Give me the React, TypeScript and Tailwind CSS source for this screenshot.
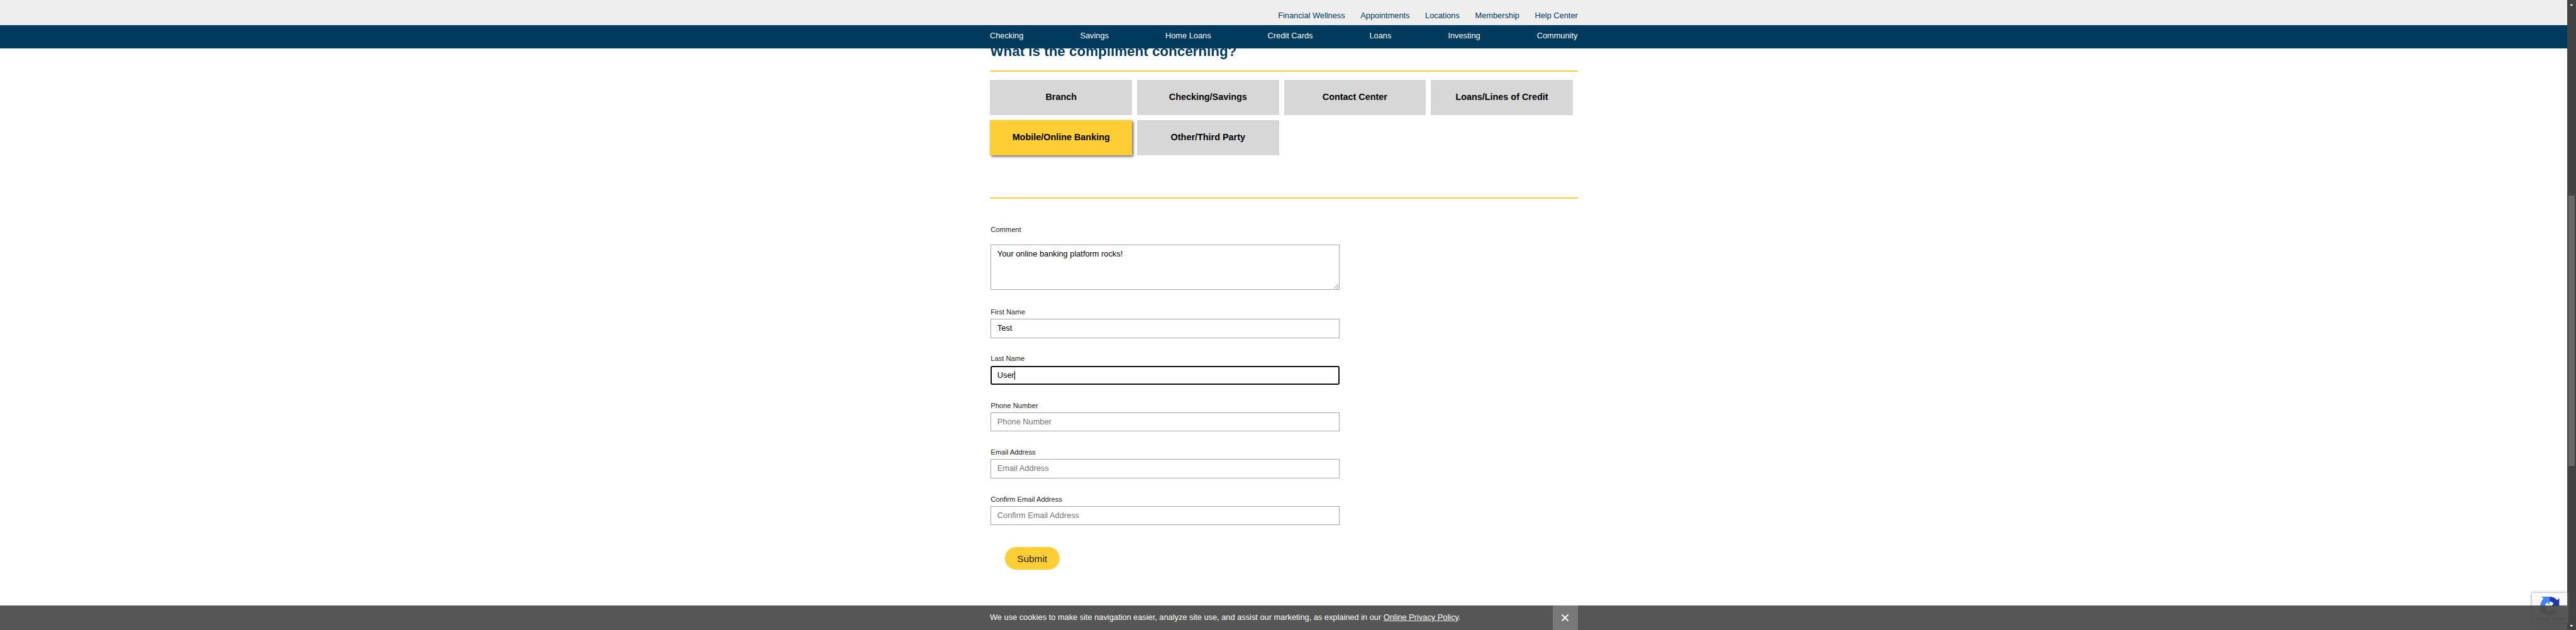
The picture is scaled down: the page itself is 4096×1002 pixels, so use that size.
import React from "react";

const topLinks = ["Financial Wellness", "Appointments", "Locations", "Membership", "Help Center"];
const navLinks = ["Checking", "Savings", "Home Loans", "Credit Cards", "Loans", "Investing", "Community"];
const topics = [
  "Branch",
  "Checking/Savings",
  "Contact Center",
  "Loans/Lines of Credit",
  "Mobile/Online Banking",
  "Other/Third Party",
];
const selectedTopic = "Mobile/Online Banking";

type FieldProps = { label: string; value?: string; focused?: boolean };

function Field({ label, value, focused }: FieldProps) {
  return (
    <div className="h-[74.4px]">
      <div className="h-[16px] text-[11.2px] leading-[16px] text-[#222]">{label}</div>
      <div
        className={
          focused
            ? "mt-[3.2px] flex h-[30.4px] items-center rounded-[3px] border-2 border-[#101010] pl-[8.6px] text-[12.8px] leading-[16px] text-black"
            : "mt-[3.2px] flex h-[30.4px] items-center border border-[#a6a6a6] pl-[9.6px] text-[12.8px] leading-[16px] text-black"
        }
      >
        {value ? <span>{value}</span> : <span className="text-[#757575]">{label}</span>}
        {focused && <span className="h-[14px] w-px bg-black" />}
      </div>
    </div>
  );
}

function RecaptchaBadge() {
  return (
    <div className="absolute right-0 bottom-[10.8px] flex h-[48px] w-[56px] flex-col rounded-l-[2px] bg-[#f9f9f9] pt-[5.4px] shadow-[0_0_4px_gray]">
      <svg className="ml-[12.8px] h-[30.4px] w-[30.4px]" viewBox="0 0 64 64">
        <path
          fill="#1c3aa9"
          d="M64 31.955l-.033-1.37V4.687l-7.16 7.16C50.948 4.674 42.033.093 32.05.093c-10.4 0-19.622 4.96-25.458 12.64l11.736 11.86a15.55 15.55 0 0 1 4.754-5.334c2.05-1.6 4.952-2.906 8.968-2.906.485 0 .86.057 1.135.163 4.976.393 9.288 3.14 11.828 7.124l-8.307 8.307L64 31.953"
        />
        <path
          fill="#4285f4"
          d="M31.862.094l-1.37.033H4.594l7.16 7.16C4.58 13.147 0 22.06 0 32.046c0 10.4 4.96 19.622 12.64 25.458L24.5 45.768a15.55 15.55 0 0 1-5.334-4.754c-1.6-2.05-2.906-4.952-2.906-8.968 0-.485.057-.86.163-1.135.393-4.976 3.14-9.288 7.124-11.828l8.307 8.307L31.86.095"
        />
        <path
          fill="#ababab"
          d="M.001 32.045l.033 1.37v25.898l7.16-7.16c5.86 7.173 14.774 11.754 24.76 11.754 10.4 0 19.622-4.96 25.458-12.64l-11.736-11.86a15.55 15.55 0 0 1-4.754 5.334c-2.05 1.6-4.952 2.906-8.968 2.906-.485 0-.86-.057-1.135-.163-4.976-.393-9.288-3.14-11.828-7.124l8.307-8.307c-10.522.04-22.4.066-27.295-.005"
        />
      </svg>
      <div className="mt-[2px] ml-[5.6px] font-[Roboto,sans-serif] text-[6.4px] leading-[8px] whitespace-nowrap text-[#555]">
        Privacy - Terms
      </div>
    </div>
  );
}

export default function App() {
  return (
    <div className="flex h-[1002px] w-[4096px] overflow-hidden bg-white font-['Liberation_Sans',Arial,sans-serif] text-[12.8px]">
      <div className="relative flex min-w-0 flex-1 flex-col">
        <header className="relative z-10">
          <div className="h-[40px] bg-[#eee]">
            <div className="ml-[1574.4px] flex w-[934.4px] justify-end gap-[24.6px] pt-[16.5px] leading-[16px] text-[#003a5d]">
              {topLinks.map((link) => (
                <a key={link}>{link}</a>
              ))}
            </div>
          </div>
          <nav className="h-[36.8px] bg-[#003a5d]">
            <div className="ml-[1574px] flex w-[934.4px] justify-between pt-[9.2px] leading-[16px] text-white">
              {navLinks.map((link) => (
                <a key={link}>{link}</a>
              ))}
            </div>
          </nav>
        </header>

        <main className="ml-[1574.4px] w-[934.4px]">
          <div className="flex h-[35.2px] items-end pb-[16.8px]">
            <h1 className="text-[22.4px] leading-[26px] font-bold whitespace-nowrap text-[#003a5d]">
              What is the compliment concerning?
            </h1>
          </div>
          <div className="h-[2.4px] bg-[#ffcd34]" />

          <div className="mt-[12.8px] grid h-[186.4px] grid-cols-[repeat(4,225.6px)] grid-rows-[56px_56px] gap-[8px]">
            {topics.map((topic) => (
              <button
                key={topic}
                className={
                  topic === selectedTopic
                    ? "bg-[#ffcd34] text-[14.4px] font-bold text-black shadow-[1.6px_1.6px_4px_#666]"
                    : "bg-[#d7d7d7] text-[14.4px] font-bold text-black"
                }
              >
                {topic}
              </button>
            ))}
          </div>
          <div className="h-[2.4px] bg-[#ffcd34]" />

          <form className="ml-[0.8px] w-[555.2px] pt-[41px]">
            <div className="h-[16px] text-[11.2px] leading-[16px] text-[#222]">Comment</div>
            <div className="relative mt-[15.8px] h-[72px] border border-[#a6a6a6] pt-[6.2px] pl-[9.6px] leading-[16px] text-black">
              Your online banking platform rocks!
              <svg className="absolute right-0 bottom-0 h-[9px] w-[9px]" viewBox="0 0 9 9" stroke="#777" strokeWidth="0.9">
                <path d="M1 8 8 1M5 8 8 5" />
              </svg>
            </div>
            <div className="mt-[27.2px]">
              <Field label="First Name" value="Test" />
              <Field label="Last Name" value="User" focused />
              <Field label="Phone Number" />
              <Field label="Email Address" />
              <Field label="Confirm Email Address" />
            </div>
            <button className="mt-[10.4px] ml-[22.4px] flex h-[36px] w-[87.2px] items-center justify-center rounded-full bg-[#ffcd34] text-[15.36px] text-[#222]">
              Submit
            </button>
          </form>
        </main>

        <RecaptchaBadge />

        <footer className="absolute inset-x-0 bottom-0 h-[38.8px] bg-[#444]/90 text-white">
          <div className="ml-[1574px] flex h-full w-[934.8px] justify-between">
            <p className="pt-[10.8px] leading-[16px] whitespace-nowrap">
              We use cookies to make site navigation easier, analyze site use, and assist our marketing, as explained in our{" "}
              <a className="underline">Online Privacy Policy</a>.
            </p>
            <button className="flex w-[40px] items-center justify-center bg-[#797979]">
              <svg className="h-[11px] w-[11px]" viewBox="0 0 11 11" stroke="white" strokeWidth="1.8" strokeLinecap="round">
                <path d="M1 1 10 10M10 1 1 10" />
              </svg>
            </button>
          </div>
        </footer>
      </div>

      <div className="flex h-full w-[13.6px] flex-col items-center justify-between bg-[#424242] pt-[5.6px] pb-[5.2px]">
        <svg className="h-[3.2px] w-[5.6px]" viewBox="0 0 7 4" fill="white">
          <path d="M3.5 0 7 4H0z" />
        </svg>
        <div className="mt-[302.4px] mb-auto h-[429.6px] w-[10.4px] bg-[#686868]" />
        <svg className="h-[3.2px] w-[5.6px]" viewBox="0 0 7 4" fill="white">
          <path d="M0 0h7L3.5 4z" />
        </svg>
      </div>
    </div>
  );
}
